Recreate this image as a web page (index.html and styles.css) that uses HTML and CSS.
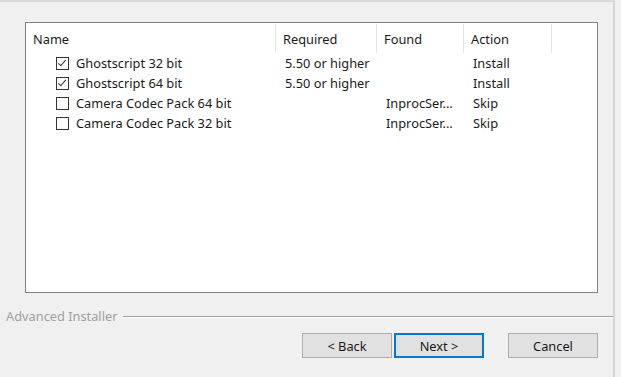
FILE: index.html
```html
<!DOCTYPE html>
<html lang="en">
<head>
    <meta charset="UTF-8">
    <title>Advanced Installer - Prerequisites</title>
    <link rel="stylesheet" href="styles.css">
</head>
<body>
    <div class="window">
        <!-- Prerequisites list -->
        <div class="list">
            <div class="list-header">
                <div class="col col-name">Name</div>
                <div class="col col-req">Required</div>
                <div class="col col-found">Found</div>
                <div class="col col-action">Action</div>
            </div>
            <div class="row">
                <div class="cell col-name"><span class="check checked"></span>Ghostscript 32 bit</div>
                <div class="cell col-req">5.50 or higher</div>
                <div class="cell col-found"></div>
                <div class="cell col-action">Install</div>
            </div>
            <div class="row">
                <div class="cell col-name"><span class="check checked"></span>Ghostscript 64 bit</div>
                <div class="cell col-req">5.50 or higher</div>
                <div class="cell col-found"></div>
                <div class="cell col-action">Install</div>
            </div>
            <div class="row">
                <div class="cell col-name"><span class="check"></span>Camera Codec Pack 64 bit</div>
                <div class="cell col-req"></div>
                <div class="cell col-found">InprocSer...</div>
                <div class="cell col-action">Skip</div>
            </div>
            <div class="row">
                <div class="cell col-name"><span class="check"></span>Camera Codec Pack 32 bit</div>
                <div class="cell col-req"></div>
                <div class="cell col-found">InprocSer...</div>
                <div class="cell col-action">Skip</div>
            </div>
        </div>

        <!-- Footer -->
        <div class="brand">
            <span class="brand-text">Advanced Installer</span>
            <span class="brand-line"></span>
        </div>
        <div class="buttons">
            <button class="btn">&lt; Back</button>
            <button class="btn btn-default">Next &gt;</button>
            <button class="btn btn-cancel">Cancel</button>
        </div>
    </div>
</body>
</html>
```

FILE: styles.css
```css
body {
    margin: 0;
    padding: 0;
    background-color: #f0f0f0;
    font-family: "Noto Sans", "Segoe UI", sans-serif;
    font-size: 12.8px;
    color: #1a1a1a;
}
.window {
    width: 613px;
    height: 375px;
    border-top: 2px solid #dadada;
    border-right: 2px solid #d5d5d5;
    box-sizing: content-box;
}
.list {
    margin: 20px 0 0 25px;
    width: 571px;
    height: 269px;
    background-color: white;
    border: 1px solid #828282;
}
.list-header {
    display: flex;
    height: 29px;
    padding-top: 1px;
}
.list-header .col {
    height: 29px;
    line-height: 31px;
    padding-left: 7px;
    border-right: 1px solid #e5e5e5;
    box-sizing: border-box;
}
.col-name { width: 250px; }
.col-req { width: 101px; }
.col-found { width: 87px; }
.col-action { width: 88px; }
.row {
    display: flex;
    height: 20px;
    line-height: 20px;
}
.cell {
    padding-left: 9px;
    box-sizing: border-box;
    white-space: nowrap;
}
.row .col-name {
    display: flex;
    align-items: center;
    padding-left: 30px;
}
.check {
    width: 11px;
    height: 11px;
    border: 1px solid #333;
    margin-right: 7px;
    position: relative;
}
.check.checked::after {
    content: "";
    position: absolute;
    left: 3px;
    top: 0px;
    width: 3px;
    height: 7px;
    border-right: 1px solid #333;
    border-bottom: 1px solid #333;
    transform: rotate(40deg);
}
.brand {
    display: flex;
    align-items: center;
    margin-top: 14px;
    padding-left: 6px;
}
.brand-text {
    color: #a0a0a0;
    margin-right: 6px;
}
.brand-line {
    flex: 1;
    height: 0;
    border-top: 1px solid #a0a0a0;
    border-bottom: 1px solid #ffffff;
    margin-top: 2px;
}
.buttons {
    display: flex;
    margin: 8px 0 0 302px;
}
.btn {
    width: 90px;
    height: 25px;
    background-color: #e1e1e1;
    border: 1px solid #adadad;
    font-family: inherit;
    font-size: 12.8px;
    color: #1a1a1a;
    padding: 0;
    margin-right: 2px;
}
.btn-default {
    border: 2px solid #0078d7;
}
.btn-cancel {
    margin-left: 22px;
}
```
